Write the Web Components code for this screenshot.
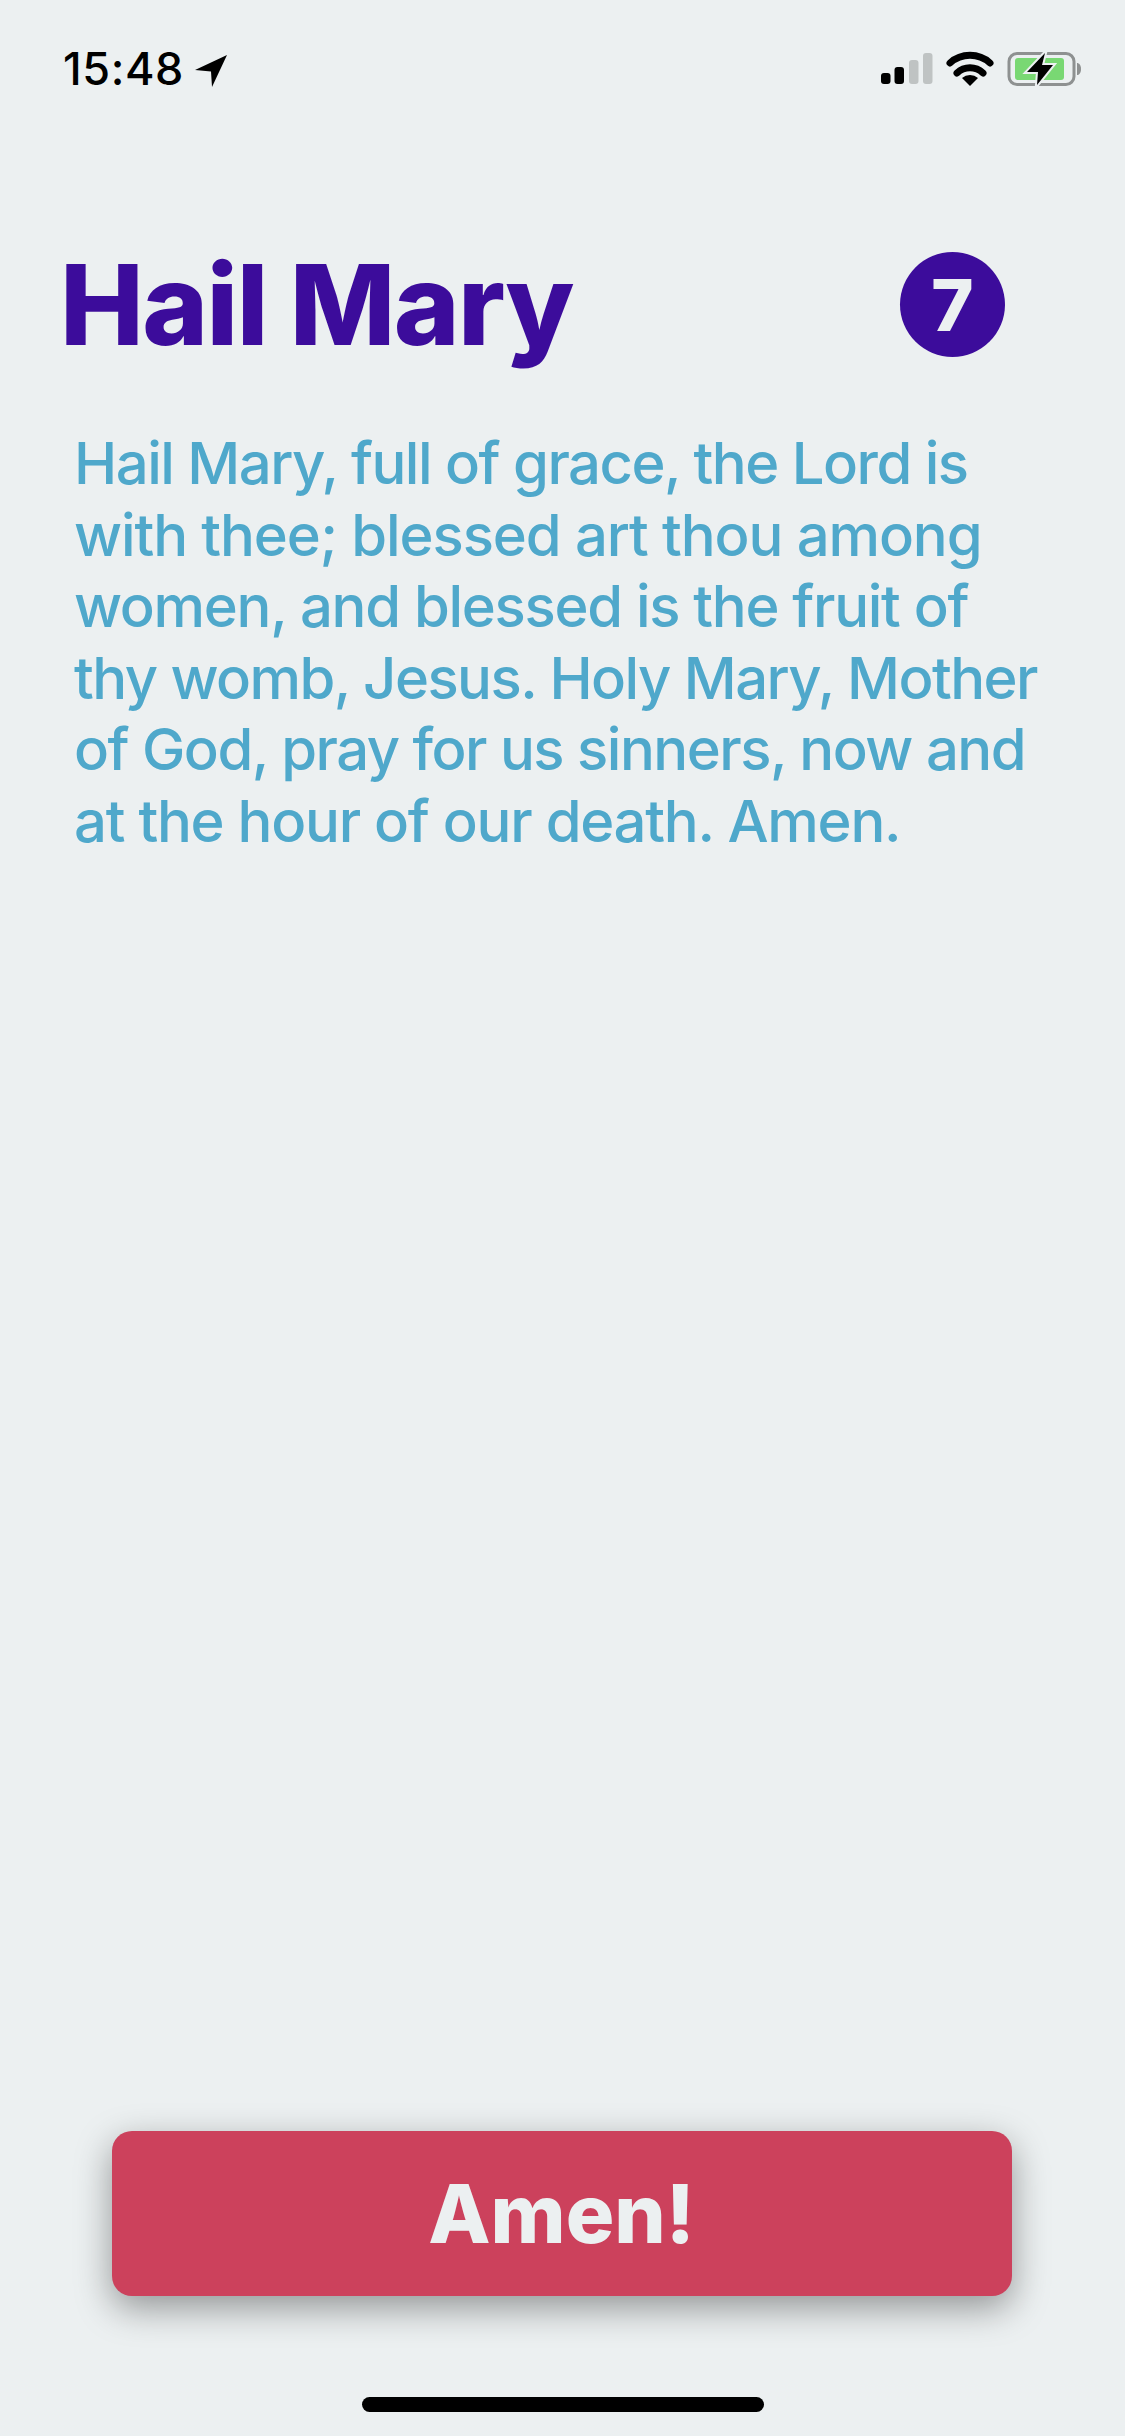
<!DOCTYPE html>
<html>
<head>
<meta charset="utf-8">
<style>
  html, body { margin: 0; padding: 0; background: #ecf0f1; }
  body { font-family: "Inter", "Liberation Sans", sans-serif; }
</style>
</head>
<body>
<prayer-screen>
  <status-bar slot="status" time="15:48"></status-bar>
  <prayer-header slot="header" count="7">Hail Mary</prayer-header>
  <prayer-text slot="body">Hail Mary, full of grace, the Lord is<br><span style="letter-spacing:-1.100px">with thee; blessed art thou among</span><br><span style="letter-spacing:-1.300px">women, and blessed is the fruit of</span><br><span style="letter-spacing:-1.550px">thy womb, Jesus. Holy Mary, Mother</span><br>of God, pray for us sinners, now and<br><span style="letter-spacing:-1.250px">at the hour of our death. Amen.</span></prayer-text>
  <amen-button slot="action">Amen!</amen-button>
</prayer-screen>

<script>
// Status bar with time, location arrow, signal, wifi and battery
class StatusBar extends HTMLElement {
  constructor() {
    super();
    this.attachShadow({ mode: "open" }).innerHTML = `
      <style>
        :host { display: flex; justify-content: space-between; align-items: flex-start; height: 100px; padding: 0 44px 0 63px; color: #000; }
        .left { display: flex; align-items: center; margin-top: 46px; height: 46px; }
        .time { font-size: 45px; font-weight: 500; line-height: 46px; letter-spacing: 0.6px; }
        .arrow { margin: 4px 0 0 11px; display: block; }
        .icons { display: block; margin-top: 50px; }
      </style>
      <div class="left">
        <span class="time">${this.getAttribute("time")}</span>
        <svg class="arrow" width="32" height="32" viewBox="0 0 32 32"><path d="M32 0 L0 15 L16 16.500 L17 32 Z" fill="#000"/></svg>
      </div>
      <svg class="icons" width="200" height="38" viewBox="0 0 200 38">
        <rect x="0" y="23" width="9.500" height="11" rx="3" fill="#000"/>
        <rect x="13.500" y="17" width="9.500" height="17" rx="3" fill="#000"/>
        <rect x="28" y="10" width="9.500" height="24" rx="3" fill="#bfc3c3"/>
        <rect x="42" y="3" width="9.500" height="31" rx="3" fill="#bfc3c3"/>
        <path d="M69 13 A30 30 0 0 1 109 13" fill="none" stroke="#000" stroke-width="7" stroke-linecap="round"/>
        <path d="M76 23 A19 19 0 0 1 102 23" fill="none" stroke="#000" stroke-width="7" stroke-linecap="round"/>
        <path d="M81 28 A12 12 0 0 1 97 28 L89 36 Z" fill="#000"/>
        <rect x="128" y="3.500" width="65" height="31" rx="8" fill="none" stroke="#8e9191" stroke-width="3"/>
        <path d="M196 13 C198 13 200 15 200 19 C200 23 198 25 196 25 Z" fill="#8e9191"/>
        <rect x="134" y="8" width="49" height="22" rx="3" fill="#79d873"/>
        <path d="M164 3 L146 22 L157 22 L156 35 L172 15 L161 15 Z" fill="#000" stroke="#ecf0f1" stroke-width="4" paint-order="stroke"/>
      </svg>
    `;
  }
}
customElements.define("status-bar", StatusBar);

class PrayerHeader extends HTMLElement {
  constructor() {
    super();
    this.attachShadow({ mode: "open" }).innerHTML = `
      <style>
        :host { display: flex; align-items: center; justify-content: space-between; padding: 0 120px 0 60px; margin-top: 152px; height: 105px; color: #3c0c9b; }
        h1 { margin: 0; font-size: 112px; line-height: 105px; font-weight: 800; letter-spacing: -1.600px; }
        .count { width: 105px; height: 105px; border-radius: 50%; background: #3c0c9b; color: #ecf0f1; display: flex; align-items: center; justify-content: center; font-size: 72px; font-weight: 800; }
      </style>
      <h1><slot></slot></h1>
      <div class="count">${this.getAttribute("count")}</div>
    `;
  }
}
customElements.define("prayer-header", PrayerHeader);

class PrayerText extends HTMLElement {
  constructor() {
    super();
    this.attachShadow({ mode: "open" }).innerHTML = `
      <style>
        :host { display: block; padding: 0 0 0 74px; margin-top: 71px; font-size: 58px; font-weight: 500; line-height: 71.500px; letter-spacing: -1.500px; color: #4fa8cb; white-space: nowrap; }
      </style>
      <slot></slot>
    `;
  }
}
customElements.define("prayer-text", PrayerText);

class AmenButton extends HTMLElement {
  constructor() {
    super();
    this.attachShadow({ mode: "open" }).innerHTML = `
      <style>
        :host { display: flex; align-items: center; justify-content: center; width: 900px; height: 165px; border-radius: 20px; background: #cc415c; color: #ecf0f1; font-size: 81px; font-weight: 800; box-shadow: 0 12px 36px rgba(0, 0, 0, 0.38); }
      </style>
      <slot></slot>
    `;
  }
}
customElements.define("amen-button", AmenButton);

// Full page column, button and home bar pinned to the bottom by the spacer
class PrayerScreen extends HTMLElement {
  constructor() {
    super();
    this.attachShadow({ mode: "open" }).innerHTML = `
      <style>
        :host { display: flex; flex-direction: column; height: 2436px; width: 1125px; overflow: hidden; background: #ecf0f1; }
        .spacer { flex: 1; }
        .action { display: flex; justify-content: center; padding-right: 2px; }
        .home { width: 402px; height: 15px; border-radius: 8px; background: #000; margin: 101px auto 24px; }
      </style>
      <slot name="status"></slot>
      <slot name="header"></slot>
      <slot name="body"></slot>
      <div class="spacer"></div>
      <div class="action"><slot name="action"></slot></div>
      <div class="home"></div>
    `;
  }
}
customElements.define("prayer-screen", PrayerScreen);
</script>
</body>
</html>
